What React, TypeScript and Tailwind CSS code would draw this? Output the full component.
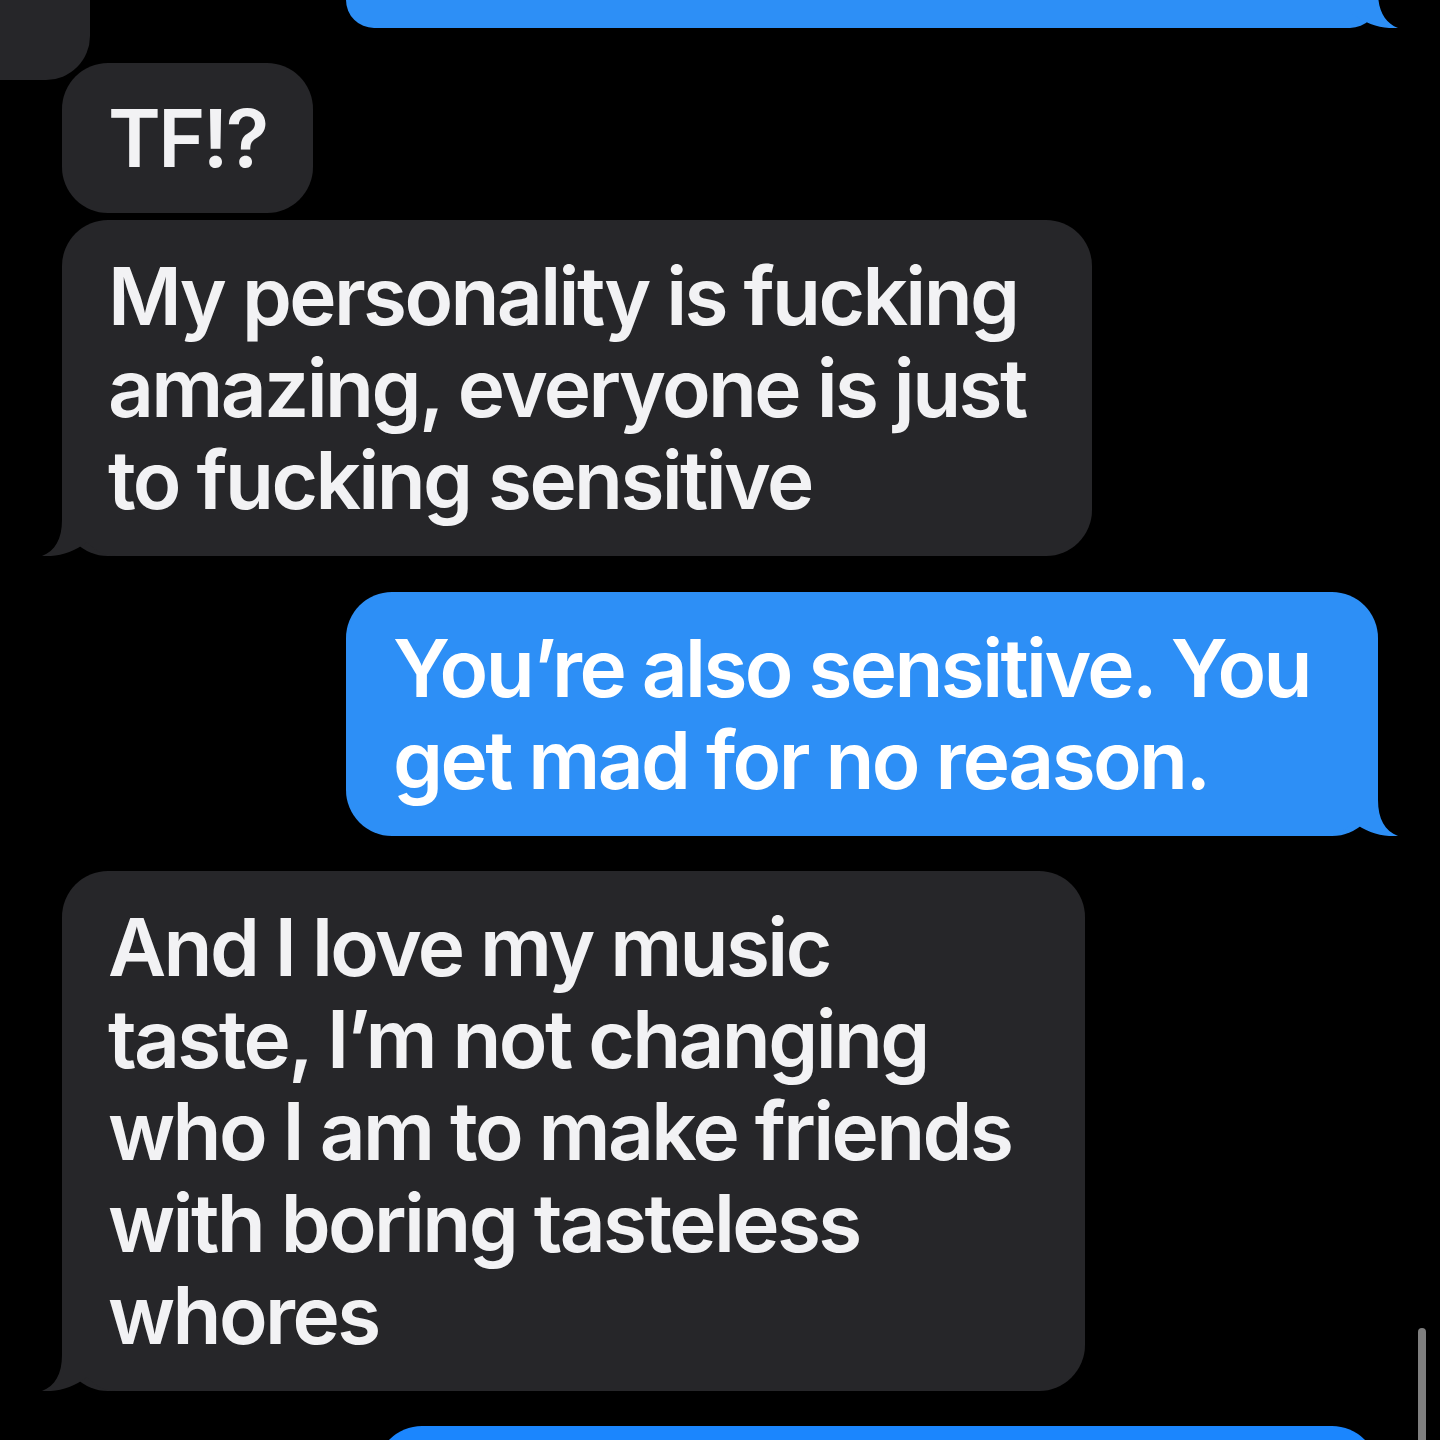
const GRAY = "bg-[#262629]";

function Tail({ side, color }: { side: "left" | "right"; color: string }) {
  return (
    <svg
      width="75"
      height="50"
      viewBox="0 0 75 50"
      className={`absolute bottom-0 ${side === "right" ? "-right-[20px]" : "-left-[20px] -scale-x-100"}`}
    >
      <path
        d="M55 0 L55 14 C55 33 62 45 75 50 C60 51 44 47 30 36 C22 45 12 50 0 50 L0 0 Z"
        fill={color}
      />
    </svg>
  );
}

type BubbleProps = {
  lines: string[];
  side: "left" | "right";
  className?: string;
  tail?: boolean;
};

function Bubble({ lines, side, className = "", tail = true }: BubbleProps) {
  const isMe = side === "right";
  return (
    <div
      className={`relative rounded-[46px] ${
        isMe ? "bg-[#2d8ff6] pl-[47px] text-white" : `${GRAY} pl-[46px] text-[#f2f2f4]`
      } ${className}`}
    >
      {lines.map((l, i) => (
        <p key={i} className="whitespace-nowrap text-[80px] leading-[92px] tracking-[-2.6px]">
          {l}
        </p>
      ))}
      {tail && <Tail side={side} color={isMe ? "#2d8ff6" : "#262629"} />}
    </div>
  );
}

export default function App() {
  return (
    <div className="relative h-[1440px] w-[1440px] overflow-hidden bg-black font-['Inter','Noto_Sans',sans-serif] font-semibold antialiased">
      <div className="flex flex-col">
        {/* tail ends of the previous messages */}
        <div className="flex h-[80px] items-start">
          <div className={`h-[80px] w-[90px] rounded-br-[44px] ${GRAY}`} />
          <div className="relative ml-[256px] h-[28px] w-[1032px] rounded-b-[46px] bg-[#2d8ff6]">
            <Tail side="right" color="#2d8ff6" />
          </div>
        </div>

        <Bubble side="left" tail={false} lines={["TF!?"]} className="-mt-[17px] ml-[62px] w-[251px] py-[29px]" />

        <Bubble
          side="left"
          lines={["My personality is fucking", "amazing, everyone is just", "to fucking sensitive"]}
          className="mt-[7px] ml-[62px] w-[1030px] py-[30px]"
        />

        <Bubble
          side="right"
          lines={["You’re also sensitive. You", "get mad for no reason."]}
          className="mt-[36px] ml-[346px] w-[1032px] py-[30px]"
        />

        <Bubble
          side="left"
          lines={[
            "And I love my music",
            "taste, I’m not changing",
            "who I am to make friends",
            "with boring tasteless",
            "whores",
          ]}
          className="mt-[35px] ml-[62px] w-[1023px] py-[30px]"
        />

        <div className="mt-[35px] ml-[376px] h-[200px] w-[1002px] rounded-[46px] bg-[#1b86fe]" />
      </div>

      <div className="absolute top-[1328px] left-[1418px] h-[130px] w-[8px] rounded-full bg-[#7f7f7f]" />
    </div>
  );
}
